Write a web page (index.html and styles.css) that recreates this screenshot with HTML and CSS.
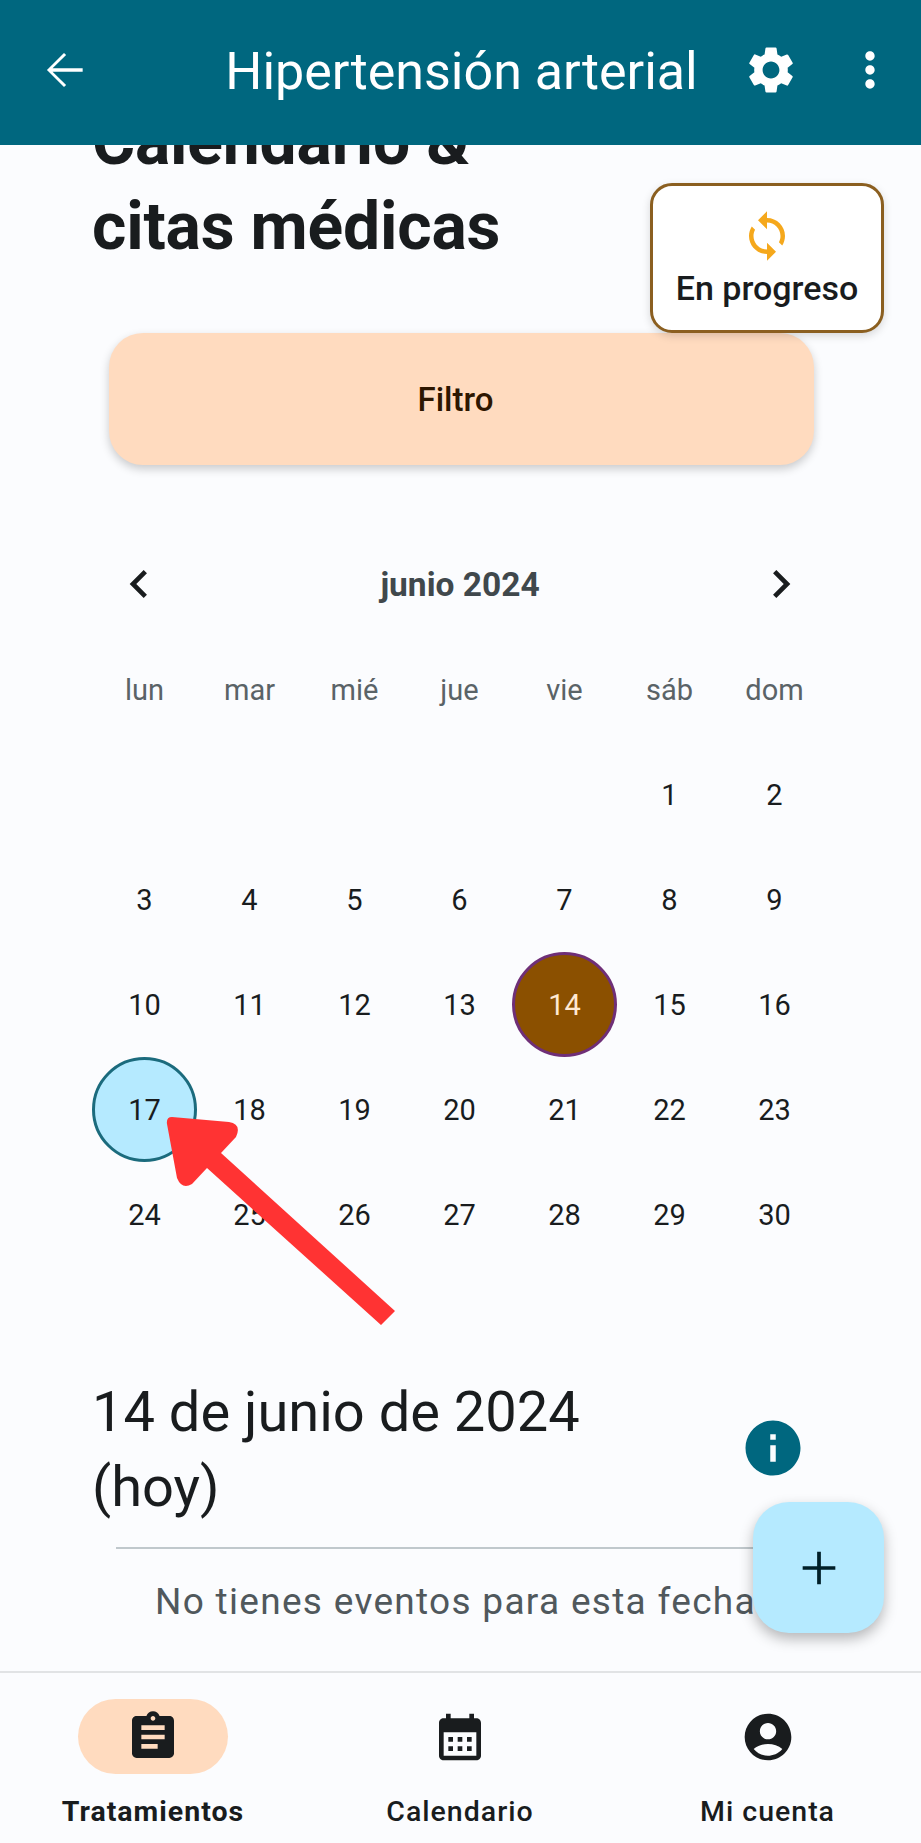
FILE: index.html
```html
<!DOCTYPE html>
<html lang="es">
<head>
<meta charset="utf-8">
<title>Calendario</title>
<link rel="stylesheet" href="styles.css">
</head>
<body>
<div class="app">
  <header class="topbar">
    <svg class="icon back" viewBox="0 0 24 24"><path d="M20 11.2H7.1l5.8-5.6L12 4.7 4.7 12l7.3 7.3.9-.9-5.8-5.6H20z"/></svg>
    <h1 class="title">Hipertensión arterial</h1>
    <svg class="icon gear" viewBox="0 0 24 24"><path d="M19.14 12.94c.04-.3.06-.61.06-.94 0-.32-.02-.64-.07-.94l2.03-1.58c.18-.14.23-.41.12-.61l-1.92-3.32c-.12-.22-.37-.29-.59-.22l-2.39.96c-.5-.38-1.03-.7-1.62-.94l-.36-2.54c-.04-.24-.24-.41-.48-.41h-3.84c-.24 0-.43.17-.47.41l-.36 2.54c-.59.24-1.13.57-1.62.94l-2.39-.96c-.22-.08-.47 0-.59.22L2.74 8.87c-.12.21-.08.47.12.61l2.03 1.58c-.05.3-.09.63-.09.94s.02.64.07.94l-2.03 1.58c-.18.14-.23.41-.12.61l1.92 3.32c.12.22.37.29.59.22l2.39-.96c.5.38 1.03.7 1.62.94l.36 2.54c.05.24.24.41.48.41h3.84c.24 0 .44-.17.47-.41l.36-2.54c.59-.24 1.13-.56 1.62-.94l2.39.96c.22.08.47 0 .59-.22l1.92-3.32c.12-.22.07-.47-.12-.61l-2.01-1.58zM12 15.6c-1.98 0-3.6-1.62-3.6-3.6s1.62-3.6 3.6-3.6 3.6 1.62 3.6 3.6-1.62 3.6-3.6 3.6z"/></svg>
    <svg class="icon more" viewBox="0 0 24 24"><path d="M12 8c1.1 0 2-.9 2-2s-.9-2-2-2-2 .9-2 2 .9 2 2 2zm0 2c-1.1 0-2 .9-2 2s.9 2 2 2 2-.9 2-2-.9-2-2-2zm0 6c-1.1 0-2 .9-2 2s.9 2 2 2 2-.9 2-2-.9-2-2-2z"/></svg>
  </header>

  <main class="content">
    <h2 class="page-title">Calendario &amp;<br>citas médicas</h2>
    <button class="filter">Filtro</button>

    <section class="calendar">
      <div class="month">
        <svg class="icon" viewBox="0 0 24 24"><path d="M15.41 7.41 14 6l-6 6 6 6 1.41-1.41L10.83 12z"/></svg>
        <span class="month-label">junio 2024</span>
        <svg class="icon" viewBox="0 0 24 24"><path d="M10 6 8.59 7.41 13.17 12l-4.58 4.58L10 18l6-6z"/></svg>
      </div>
      <div class="grid weekdays">
        <span>lun</span><span>mar</span><span>mié</span><span>jue</span><span>vie</span><span>sáb</span><span>dom</span>
      </div>
      <div class="grid days">
        <span></span><span></span><span></span><span></span><span></span><span>1</span><span>2</span>
        <span>3</span><span>4</span><span>5</span><span>6</span><span>7</span><span>8</span><span>9</span>
        <span>10</span><span>11</span><span>12</span><span>13</span><span class="today">14</span><span>15</span><span>16</span>
        <span class="selected">17</span><span>18</span><span>19</span><span>20</span><span>21</span><span>22</span><span>23</span>
        <span>24</span><span>25</span><span>26</span><span>27</span><span>28</span><span>29</span><span>30</span>
      </div>
    </section>

    <section class="events">
      <div class="date-row">
        <h3 class="date">14 de junio de 2024<br>(hoy)</h3>
        <svg class="icon info" viewBox="0 0 24 24"><path d="M12 2C6.48 2 2 6.48 2 12s4.48 10 10 10 10-4.48 10-10S17.52 2 12 2zm1 15h-2v-6h2v6zm0-8h-2V7h2v2z"/></svg>
      </div>
      <hr class="rule">
      <p class="empty">No tienes eventos para esta fecha</p>
    </section>

    <div class="status">
      <svg class="icon sync" viewBox="0 0 24 24"><path d="M12 4V1L8 5l4 4V6c3.31 0 6 2.69 6 6 0 1.01-.25 1.97-.7 2.8l1.46 1.46C19.54 15.03 20 13.57 20 12c0-4.42-3.58-8-8-8zm0 14c-3.31 0-6-2.69-6-6 0-1.01.25-1.97.7-2.8L5.24 7.74C4.46 8.97 4 10.43 4 12c0 4.42 3.58 8 8 8v3l4-4-4-4v3z"/></svg>
      <span>En progreso</span>
    </div>
    <button class="fab" aria-label="Añadir">
      <svg class="icon" viewBox="0 0 24 24"><path d="M19 12.8h-6.2V19h-1.6v-6.2H5v-1.6h6.2V5h1.6v6.2H19z"/></svg>
    </button>
  </main>

  <nav class="tabs">
    <div class="tab active">
      <div class="pill"><svg class="icon" viewBox="0 0 24 24"><path d="M19 3h-4.18C14.4 1.84 13.3 1 12 1c-1.3 0-2.4.84-2.82 2H5c-1.1 0-2 .9-2 2v14c0 1.1.9 2 2 2h14c1.1 0 2-.9 2-2V5c0-1.1-.9-2-2-2zm-7 0c.55 0 1 .45 1 1s-.45 1-1 1-1-.45-1-1 .45-1 1-1zm2 14H7v-2h7v2zm3-4H7v-2h10v2zm0-4H7V7h10v2z"/></svg></div>
      <span class="tab-label">Tratamientos</span>
    </div>
    <div class="tab">
      <div class="pill"><svg class="icon" viewBox="0 0 24 24"><path d="M19 4h-1V2h-2v2H8V2H6v2H5c-1.11 0-1.99.9-1.99 2L3 20c0 1.1.89 2 2 2h14c1.1 0 2-.9 2-2V6c0-1.1-.9-2-2-2zm0 16H5V10h14v10zM9 14H7v-2h2v2zm4 0h-2v-2h2v2zm4 0h-2v-2h2v2zm-8 4H7v-2h2v2zm4 0h-2v-2h2v2zm4 0h-2v-2h2v2z"/></svg></div>
      <span class="tab-label">Calendario</span>
    </div>
    <div class="tab">
      <div class="pill"><svg class="icon" viewBox="0 0 24 24"><path d="M12 2C6.48 2 2 6.48 2 12s4.48 10 10 10 10-4.48 10-10S17.52 2 12 2zm0 4c1.93 0 3.5 1.57 3.5 3.5S13.93 13 12 13s-3.5-1.57-3.5-3.5S10.07 6 12 6zm0 14c-2.03 0-4.43-.82-6.14-2.88C7.55 15.8 9.68 15 12 15s4.45.8 6.14 2.12C16.43 19.18 14.03 20 12 20z"/></svg></div>
      <span class="tab-label">Mi cuenta</span>
    </div>
  </nav>

  <svg class="annotation" viewBox="0 0 921 1843" aria-hidden="true">
    <path class="arrow" d="M172 1117 L229 1122 Q242 1124 236 1137 L221 1153 L395 1311 L381 1325 L207 1168 L192 1184 Q182 1190 177 1178 L167 1124 Q166 1117 172 1117 Z"/>
  </svg>
</div>
</body>
</html>
```
FILE: styles.css
```css
* { box-sizing: border-box; }
html, body { margin: 0; padding: 0; }
body { background: #fbfcfe; font-family: Roboto, "Liberation Sans", sans-serif; color: #191c1e; }
.app { position: relative; width: 921px; height: 1843px; display: flex; flex-direction: column; overflow: hidden; }
.icon { width: 56px; height: 56px; fill: currentColor; display: block; flex: none; }

.topbar { height: 145px; flex: none; background: #00677f; color: #fff; display: flex; align-items: center; padding: 0 23px 5px 36px; position: relative; z-index: 2; }
.title { flex: 1; margin: 4px 0 0; font-size: 52px; font-weight: 400; line-height: 60px; text-align: center; padding-left: 88px; white-space: nowrap; }
.gear { margin: 0 43px 0 0; }

.content { flex: 1; position: relative; overflow: hidden; }
.page-title { margin: -46px 0 0 92px; font-size: 66px; font-weight: 700; line-height: 85px; letter-spacing: -0.2px; }
.filter { display: block; margin: 64px 0 0 109px; padding: 0 12px 0 0; width: 705px; height: 132px; border: 0; border-radius: 34px; background: #ffdbbf; color: #2d1600; font: 500 33px Roboto, sans-serif; box-shadow: 0 4px 10px rgba(0,0,0,.2); }

.calendar { margin: 91px 0 0 92px; width: 735px; }
.month { display: flex; align-items: center; justify-content: space-between; padding: 0 18px 0 19px; height: 56px; }
.month-label { font-size: 33.5px; font-weight: 700; color: #40484c; }
.grid { display: grid; grid-template-columns: repeat(7, 105px); }
.grid span { display: flex; align-items: center; justify-content: center; height: 105px; }
.weekdays { margin-top: 25px; font-size: 29px; color: #5a6367; }
.days { font-size: 29px; }
.days .today { background: #8b5000; color: #ffe9d2; border: 3px solid #6f2f77; border-radius: 50%; }
.days .selected { background: #b5eaff; border: 3px solid #1b6b7d; border-radius: 50%; }

.events { margin: 0 0 0 92px; }
.date-row { display: flex; align-items: center; margin-top: 108px; }
.date { margin: 0; width: 648px; font-size: 56px; font-weight: 400; line-height: 75px; }
.info { width: 66px; height: 66px; color: #00677f; margin-bottom: 5px; }
.rule { margin: 22px 0 0 24px; width: 670px; height: 2px; border: 0; background: #c0c8cc; }
.empty { margin: 29px 0 0 63px; font-size: 37px; line-height: 48px; color: #50585c; letter-spacing: 1.3px; white-space: nowrap; }

.status { position: absolute; left: 650px; top: 38px; width: 234px; height: 150px; background: #fff; border: 3px solid #8b5f20; border-radius: 22px; display: flex; flex-direction: column; align-items: center; justify-content: center; font-size: 34px; font-weight: 500; box-shadow: 0 3px 8px rgba(0,0,0,.15); }
.sync { width: 54px; height: 54px; color: #f5a81c; margin: 0 0 5px; }
.fab { position: absolute; left: 753px; top: 1357px; width: 131px; height: 131px; border: 0; border-radius: 36px; background: #b5eaff; color: #001f28; display: flex; align-items: center; justify-content: center; padding: 0; box-shadow: 0 6px 14px rgba(0,0,0,.28); }

.tabs { height: 172px; flex: none; border-top: 2px solid #e1e3e5; display: grid; grid-template-columns: 306px 308px 307px; background: #fbfcfe; }
.tab { display: flex; flex-direction: column; align-items: center; padding-top: 26px; }
.pill { width: 150px; height: 75px; border-radius: 38px; display: flex; align-items: center; justify-content: center; }
.active .pill { background: #ffdbbf; }
.tab-label { margin-top: 20px; font-size: 28.5px; font-weight: 500; letter-spacing: 1px; line-height: 36px; white-space: nowrap; }
.active .tab-label { font-weight: 700; }

.annotation { position: absolute; inset: 0; width: 921px; height: 1843px; pointer-events: none; z-index: 1; }
.arrow { fill: #ff3333; }
```
